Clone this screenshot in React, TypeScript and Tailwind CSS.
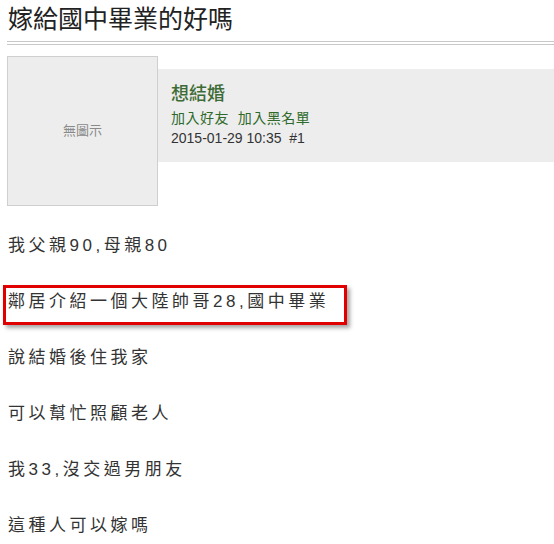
import React from "react";

const cjk = '"Liberation Sans", "Noto Sans CJK TC", sans-serif';

export default function App() {
  const lines = [
    "我父親90,母親80",
    "鄰居介紹一個大陸帥哥28,國中畢業",
    "說結婚後住我家",
    "可以幫忙照顧老人",
    "我33,沒交過男朋友",
    "這種人可以嫁嗎",
  ];
  return (
    <div className="w-[554px] h-[544px] overflow-hidden bg-white" style={{ fontFamily: cjk }}>
      <div className="pl-[8px] pt-[4px] h-[40px] text-[25px] leading-[30px] text-[#222]">嫁給國中畢業的好嗎</div>
      <div className="ml-[7px] mt-[1px] h-[4px] border-t border-b border-[#c8c8c8]" />
      <div className="flex mt-[11px]">
        <div className="ml-[7px] w-[151px] h-[150px] shrink-0 border border-[#cfcfcf] bg-[#ededed] flex items-center justify-center text-[13px] text-[#8a8a8a]">
          無圖示
        </div>
        <div className="flex-1 mt-[13px] h-[93px] bg-[#ededee] pl-[13px] pt-[14px]">
          <div className="text-[18px] leading-[22px] font-medium text-[#3d6b35]">想結婚</div>
          <div className="mt-[3px] text-[14px] leading-[20px] tracking-[0.5px] text-[#2f6a2a]">加入好友&nbsp;&nbsp;加入黑名單</div>
          <div className="text-[14px] leading-[20px] text-[#333]">2015-01-29 10:35&nbsp;&nbsp;#1</div>
        </div>
      </div>
      <div className="mt-[26px] pl-[8px] text-[17px] text-[#333] tracking-[3.5px]">
        {lines.map((t, i) => (
          <p key={i} className="relative leading-[28px] mb-[28px]">
            {t}
            {i === 1 && (
              <span className="absolute left-[-5px] top-[-3px] w-[344px] h-[40px] border-[3px] border-[#e00000] shadow-[3px_3px_4px_rgba(0,0,0,0.35)]" />
            )}
          </p>
        ))}
      </div>
    </div>
  );
}
